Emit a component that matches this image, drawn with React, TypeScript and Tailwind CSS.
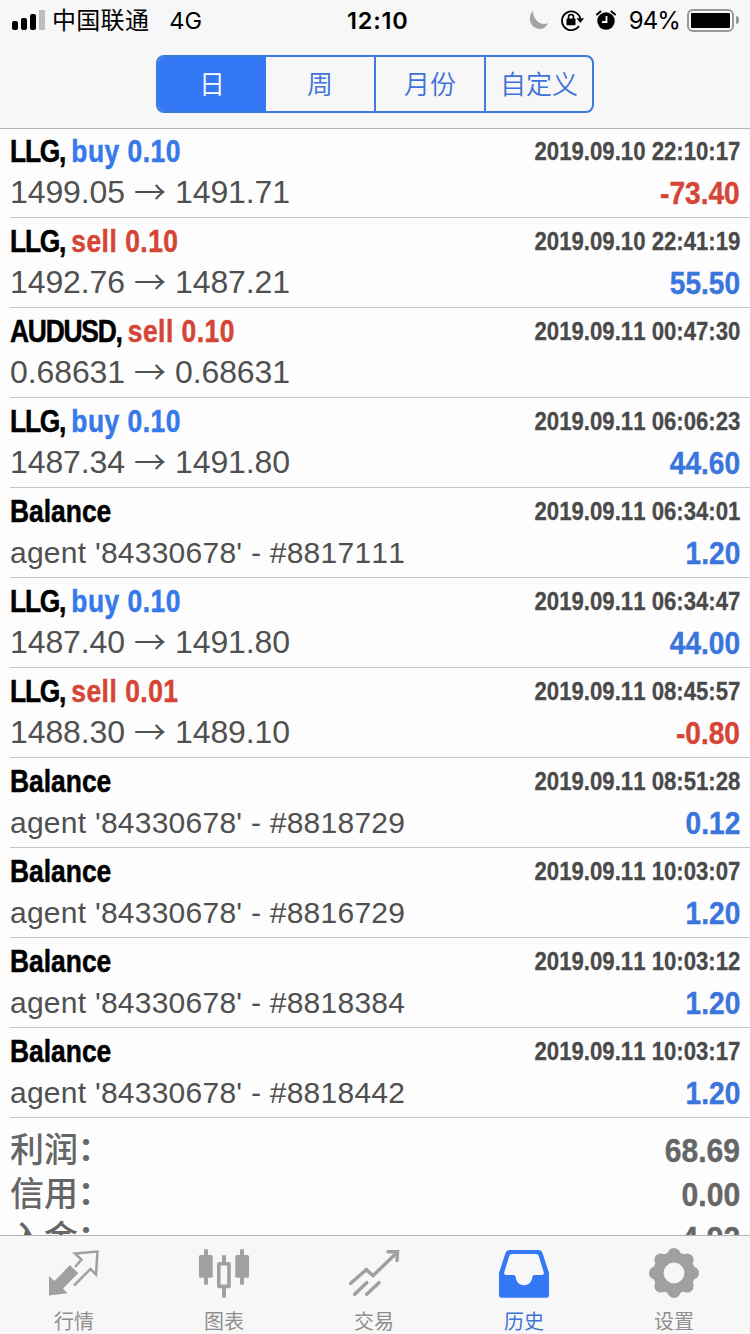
import React from 'react';

interface HistoryItem {
  symbol: string;
  side?: 'buy' | 'sell';
  volume?: string;
  time: string;
  from?: string;
  to?: string;
  comment?: string;
  profit?: string;
}

const history: HistoryItem[] = [
  { symbol: 'LLG', side: 'buy', volume: '0.10', time: '2019.09.10 22:10:17', from: '1499.05', to: '1491.71', profit: '-73.40' },
  { symbol: 'LLG', side: 'sell', volume: '0.10', time: '2019.09.10 22:41:19', from: '1492.76', to: '1487.21', profit: '55.50' },
  { symbol: 'AUDUSD', side: 'sell', volume: '0.10', time: '2019.09.11 00:47:30', from: '0.68631', to: '0.68631' },
  { symbol: 'LLG', side: 'buy', volume: '0.10', time: '2019.09.11 06:06:23', from: '1487.34', to: '1491.80', profit: '44.60' },
  { symbol: 'Balance', time: '2019.09.11 06:34:01', comment: "agent '84330678' - #8817111", profit: '1.20' },
  { symbol: 'LLG', side: 'buy', volume: '0.10', time: '2019.09.11 06:34:47', from: '1487.40', to: '1491.80', profit: '44.00' },
  { symbol: 'LLG', side: 'sell', volume: '0.01', time: '2019.09.11 08:45:57', from: '1488.30', to: '1489.10', profit: '-0.80' },
  { symbol: 'Balance', time: '2019.09.11 08:51:28', comment: "agent '84330678' - #8818729", profit: '0.12' },
  { symbol: 'Balance', time: '2019.09.11 10:03:07', comment: "agent '84330678' - #8816729", profit: '1.20' },
  { symbol: 'Balance', time: '2019.09.11 10:03:12', comment: "agent '84330678' - #8818384", profit: '1.20' },
  { symbol: 'Balance', time: '2019.09.11 10:03:17', comment: "agent '84330678' - #8818442", profit: '1.20' },
];

const summary = [
  { label: '利润', value: '68.69' },
  { label: '信用', value: '0.00' },
  { label: '入金', value: '4.92' },
];

const periods = [
  { label: '日', style: 'w-[108px] bg-[#3478f6] text-white' },
  { label: '周', style: 'w-[110px] border-r-2 border-[#3d7be0] text-[#3d72d8]' },
  { label: '月份', style: 'w-[110px] border-r-2 border-[#3d7be0] text-[#3d72d8]' },
  { label: '自定义', style: 'w-[106px] text-[#3d72d8]' },
];

const StatusBar: React.FC = () => (
  <div className="flex h-10 items-center pl-3 pr-[11px] font-['Inter','Noto_Sans_CJK_SC',sans-serif] text-black">
    <div className="flex w-[335px] items-center">
      <div className="flex h-5 items-end gap-[3px]">
        <div className="h-[9px] w-1.5 rounded-[2px] bg-black" />
        <div className="h-3 w-1.5 rounded-[2px] bg-black" />
        <div className="h-4 w-1.5 rounded-[2px] bg-black" />
        <div className="h-5 w-1.5 bg-[#bdbdbd]" />
      </div>
      <span className="ml-[7px] pt-[2px] text-[24px] leading-[38px] tracking-[0.3px]">中国联通</span>
      <span className="ml-[20px] pt-[2px] text-[23.5px] leading-[38px]">4G</span>
    </div>
    <span className="pt-[2px] text-[23.5px] font-semibold leading-[38px] tracking-[0.8px]">12:10</span>
    <div className="ml-auto flex items-center">
      <svg className="h-5 w-5" viewBox="0 0 20 20">
        <path d="M4 0.500Q-0.500 5.500 1.200 11.500Q3.700 19 11.500 19Q17 18.300 19 13.300Q13 15.500 8.500 11.500Q3.500 6.500 4 0.500Z" fill="#a3a3a3" />
      </svg>
      <svg className="ml-[11px] h-6 w-6" viewBox="0 0 24 24" fill="none">
        <path d="M19 18A9.300 9.300 0 1 1 20.300 10.500" stroke="#000" strokeWidth="1.800" />
        <path d="M16.500 10.300H24L20.300 15Z" fill="#000" />
        <rect x="6.500" y="10.500" width="9" height="6.800" rx="1" fill="#000" />
        <path d="M8.500 11V9A2.500 2.500 0 0 1 13.500 9V11" stroke="#000" strokeWidth="1.600" />
      </svg>
      <svg className="ml-[12px] h-5 w-5" viewBox="0 0 20 20" fill="none">
        <circle cx="10" cy="11" r="8.700" fill="#000" />
        <path d="M1 4.500L4.500 1.500M19 4.500L15.500 1.500" stroke="#000" strokeWidth="2" strokeLinecap="round" />
        <path d="M10.500 6V12H6" stroke="#fff" strokeWidth="1.800" />
      </svg>
      <span className="ml-[13px] pt-[2px] text-[24px] leading-[38px] tracking-[-0.9px]">94%</span>
      <div className="ml-[7px] h-[23px] w-[47px] rounded-[6px] border-2 border-[#999] p-[2px]">
        <div className="h-full w-[39px] rounded-[1px] bg-black" />
      </div>
      <div className="ml-[2px] h-2 w-[3px] rounded-r-full bg-[#999]" />
    </div>
  </div>
);

const PeriodSwitch: React.FC = () => (
  <div className="mx-auto mt-[15px] flex h-[58px] w-[438px] overflow-hidden rounded-[8px] border-2 border-[#3d7be0]">
    {periods.map((period) => (
      <div
        key={period.label}
        className={`flex items-center justify-center pt-[2px] text-[26px] font-[350] ${period.style}`}
      >
        {period.label}
      </div>
    ))}
  </div>
);

const HistoryRow: React.FC<{ item: HistoryItem }> = ({ item }) => (
  <div className="ml-[10px] h-[90px] border-b border-[#c3c4c6] pr-[10px] pt-[3px]">
    <div className="flex h-10 items-center justify-between font-bold">
      <div className="origin-left scale-x-[0.825] text-[32px] leading-10 text-black [-webkit-text-stroke:0.5px]">
        {item.side ? (
          <>
            <span className="tracking-[-1.5px]">{item.symbol}, </span>
            <span className={`tracking-[0.6px] ${item.side === 'buy' ? 'text-[#3579ea]' : 'text-[#d54536]'}`}>
              {item.side} {item.volume}
            </span>
          </>
        ) : (
          item.symbol
        )}
      </div>
      <div className="origin-right scale-x-[0.853] text-[26px] leading-10 text-[#4a4a4a] [-webkit-text-stroke:0.3px]">
        {item.time}
      </div>
    </div>
    <div className="flex h-[42px] items-center justify-between text-[#505050]">
      {item.comment ? (
        <div className="pt-px text-[30px] leading-[42px] tracking-[0.25px]">{item.comment}</div>
      ) : (
        <div className="flex text-[32px] leading-[42px] tracking-[-0.1px]">
          {item.from}
          <span className="-mt-[2px] mx-[9px] w-8 font-['Noto_Sans_CJK_SC',sans-serif] font-[350]">→</span>
          {item.to}
        </div>
      )}
      {item.profit && (
        <div
          className={`origin-right scale-x-[0.878] pt-[2px] text-[32px] font-bold leading-[42px] [-webkit-text-stroke:0.4px] ${
            item.profit.startsWith('-') ? 'text-[#d54536]' : 'text-[#3975dc]'
          }`}
        >
          {item.profit}
        </div>
      )}
    </div>
  </div>
);

const QuotesIcon: React.FC = () => (
  <svg className="size-[52px] shrink-0" viewBox="0 0 52 52" fill="none">
    <path d="M1 28L6.500 33L22 17L30.300 25.300L15 40.500L19.500 45.300L1 47.500Z" fill="#a0a0a0" />
    <path d="M27 19L33.500 11.500L27 5.500L49.500 3.500L48 26.500L42.500 21L26 37.500" stroke="#a0a0a0" strokeWidth="2.500" />
  </svg>
);

const ChartIcon: React.FC = () => (
  <svg className="size-[52px] shrink-0" viewBox="0 0 52 52" fill="none">
    <rect x="1" y="7" width="13.700" height="22.700" rx="1.500" fill="#a0a0a0" />
    <rect x="6" y="1.300" width="4" height="35.500" rx="1" fill="#a0a0a0" />
    <rect x="37.300" y="7" width="13.700" height="22.700" rx="1.500" fill="#a0a0a0" />
    <rect x="42" y="1.300" width="4" height="35.500" rx="1" fill="#a0a0a0" />
    <path d="M26 7.300V15M26 40V49.500" stroke="#a0a0a0" strokeWidth="4" />
    <rect x="20.800" y="15.800" width="10.200" height="22.600" rx="0.500" stroke="#a0a0a0" strokeWidth="3.600" />
  </svg>
);

const TradeIcon: React.FC = () => (
  <svg className="size-[52px] shrink-0" viewBox="0 0 52 52" fill="none" stroke="#a0a0a0" strokeWidth="3.500" strokeLinecap="round">
    <path d="M2.700 35.300L18.300 21.700L25 27.700L49 4.500" />
    <path d="M40 3.700H49.500L49 12.500" />
    <path d="M6.700 46.300L18.700 34.700M18.700 46.300L31 34.700" />
  </svg>
);

const HistoryIcon: React.FC = () => (
  <svg className="size-[52px] shrink-0" viewBox="0 0 52 52">
    <path
      fillRule="evenodd"
      fill="#3478f6"
      d="M11.500 2H40.500Q43.500 2 44.500 5L51 25V47Q51 49.700 48.300 49.700H3.700Q1 49.700 1 47V25L7.500 5Q8.500 2 11.500 2ZM14 6Q12 6 11.300 8L6.300 24Q5.500 27 8 27H15.500Q17.500 27 17.700 29C18.500 40 33.500 40 34.300 29Q34.500 27 36.500 27H44Q46.500 27 45.700 24L40.700 8Q40 6 38 6Z"
    />
  </svg>
);

const SettingsIcon: React.FC = () => (
  <svg className="size-[52px] shrink-0" viewBox="0 0 52 52" fill="none">
    <circle cx="26" cy="25" r="15.700" stroke="#a0a0a0" strokeWidth="10.600" />
    {[0, 45, 90, 135, 180, 225, 270, 315].map((angle) => (
      <path key={angle} d="M19 7Q20.500 0 26 0Q31.500 0 33 7Z" fill="#a0a0a0" transform={`rotate(${angle} 26 25)`} />
    ))}
  </svg>
);

const tabs = [
  { label: '行情', icon: <QuotesIcon /> },
  { label: '图表', icon: <ChartIcon /> },
  { label: '交易', icon: <TradeIcon /> },
  { label: '历史', icon: <HistoryIcon />, active: true },
  { label: '设置', icon: <SettingsIcon /> },
];

const App: React.FC = () => (
  <div className="flex h-[1334px] w-[750px] flex-col overflow-hidden bg-[#fdfdfd] font-['Liberation_Sans','Noto_Sans_CJK_SC',sans-serif] [font-kerning:none]">
    <header className="relative -mb-px h-[129px] shrink-0 border-b border-[#b2b2b5] bg-[#f7f7f7]">
      <StatusBar />
      <PeriodSwitch />
    </header>

    <main className="min-h-0 flex-1 overflow-hidden">
      {history.map((item) => (
        <HistoryRow key={item.time} item={item} />
      ))}
      <div className="px-[10px] pt-[10px] text-[#666]">
        {summary.map((row) => (
          <div key={row.label} className="flex h-11 items-center justify-between">
            <div className="flex text-[34px] font-medium leading-[44px]">
              {row.label}
              <span className="-mt-px text-[32px] font-bold">：</span>
            </div>
            <span className="origin-right scale-x-[0.885] text-[34px] font-bold leading-[44px] [-webkit-text-stroke:0.4px]">
              {row.value}
            </span>
          </div>
        ))}
      </div>
    </main>

    <nav className="flex h-[99px] shrink-0 border-t border-[#b2b2b5] bg-[#f7f7f7]">
      {tabs.map((tab) => (
        <div key={tab.label} className="flex w-[150px] flex-col items-center pr-[2px] pt-3">
          {tab.icon}
          <span className={`mt-[10px] text-[20px] leading-[24px] ${tab.active ? 'text-[#3f74d4]' : 'text-[#8f8f8f]'}`}>
            {tab.label}
          </span>
        </div>
      ))}
    </nav>
  </div>
);

export default App;
